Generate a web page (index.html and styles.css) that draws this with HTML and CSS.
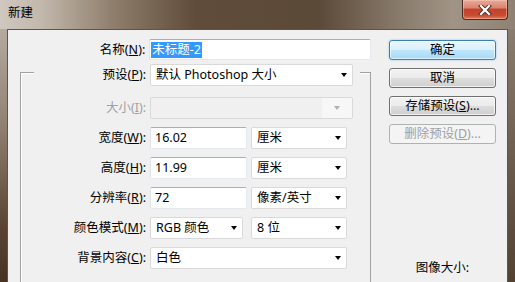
FILE: index.html
```html
<!DOCTYPE html>
<html lang="zh-CN">
<head>
    <meta charset="UTF-8">
    <title>新建</title>
    <link rel="stylesheet" href="styles.css">
</head>
<body>

    <div class="window">
        <div class="titlebar">
            <span class="title">新建</span>
            <div class="close-btn">
                <svg width="14" height="10" viewBox="0 0 14 10">
                    <path d="M3 1 L11 9 M11 1 L3 9" stroke="#4a2a22" stroke-width="4" stroke-linecap="square"/>
                    <path d="M3 1 L11 9 M11 1 L3 9" stroke="#ffffff" stroke-width="2.2" stroke-linecap="square"/>
                </svg>
            </div>
        </div>

        <div class="client">
            <div class="form">
                <!-- name -->
                <div class="row name-row">
                    <label class="lbl lbl-top">名称(<u>N</u>):</label>
                    <div class="textbox w-name"><span class="selected">未标题-2</span></div>
                </div>

                <!-- preset group -->
                <div class="group">
                    <div class="row group-head">
                        <label class="lbl lbl-head">预设(<u>P</u>):</label>
                        <div class="combo w-wide"><span class="val">默认 Photoshop 大小</span><span class="arrow"></span></div>
                    </div>

                    <div class="row">
                        <label class="lbl lbl-in disabled">大小(<u>I</u>):</label>
                        <div class="combo w-wide is-disabled"><span class="val"></span><span class="arrow-box"><span class="arrow"></span></span></div>
                    </div>

                    <div class="row">
                        <label class="lbl lbl-in">宽度(<u>W</u>):</label>
                        <div class="textbox w-num">16.02</div>
                        <div class="combo w-unit"><span class="val">厘米</span><span class="arrow"></span></div>
                    </div>

                    <div class="row">
                        <label class="lbl lbl-in">高度(<u>H</u>):</label>
                        <div class="textbox w-num">11.99</div>
                        <div class="combo w-unit"><span class="val">厘米</span><span class="arrow"></span></div>
                    </div>

                    <div class="row">
                        <label class="lbl lbl-in">分辨率(<u>R</u>):</label>
                        <div class="textbox w-num">72</div>
                        <div class="combo w-unit"><span class="val">像素/英寸</span><span class="arrow"></span></div>
                    </div>

                    <div class="row">
                        <label class="lbl lbl-in">颜色模式(<u>M</u>):</label>
                        <div class="combo w-mode"><span class="val">RGB 颜色</span><span class="arrow"></span></div>
                        <div class="combo w-unit"><span class="val">8 位</span><span class="arrow"></span></div>
                    </div>

                    <div class="row">
                        <label class="lbl lbl-in">背景内容(<u>C</u>):</label>
                        <div class="combo w-bg"><span class="val">白色</span><span class="arrow"></span></div>
                    </div>
                </div>
            </div>

            <div class="side">
                <button class="btn btn-default">确定</button>
                <button class="btn">取消</button>
                <button class="btn">存储预设(<u>S</u>)...</button>
                <button class="btn" disabled>删除预设(<u>D</u>)...</button>
                <div class="img-size">图像大小:</div>
            </div>
        </div>
    </div>

</body>
</html>
```

FILE: styles.css
```css
body {
    margin: 0;
    font-family: "Noto Sans", "Noto Sans CJK SC", sans-serif;
    font-size: 12.5px;
    color: #000;
}

.window {
    width: 515px;
    height: 282px;
    overflow: hidden;
    display: flex;
    flex-direction: column;
    background:
        linear-gradient(180deg, #b4aba0 0, #8f7f70 35%, #5a4332 70%, #3e2a1c 100%) no-repeat 0 29px / 7px 100%,
        linear-gradient(180deg, #8a7c6e 0, #6a5a4b 50%, #4d3a2b 100%) no-repeat 508px 29px / 7px 100%,
        linear-gradient(90deg, #cfc8bf 0, #c2b8ac 8%, #8f7e6c 22%, #5f4c3a 38%, #5c4a39 62%, #8a7c6d 78%, #a09486 88%, #8f8274 100%);
}

/* title bar */
.titlebar {
    flex-shrink: 0;
    height: 29px;
    display: flex;
    justify-content: space-between;
    align-items: flex-start;
}
.title {
    padding: 5px 0 0 8px;
    line-height: 16px;
}
.close-btn {
    box-sizing: border-box;
    width: 46px;
    height: 20px;
    margin-right: 7px;
    border: 1px solid #4a2a22;
    border-top: none;
    border-radius: 0 0 4px 4px;
    background: linear-gradient(180deg, #e9a99a 0, #d98670 40%, #c2432b 50%, #c94a31 80%, #e07a5c 100%);
    box-shadow: inset 0 0 0 1px rgba(255, 210, 190, 0.45);
    display: flex;
    align-items: center;
    justify-content: center;
}

/* client area */
.client {
    flex: 1;
    min-height: 0;
    margin: 0 7px;
    border: 1px solid #5e544b;
    border-bottom: none;
    background: #f0f0f0;
    padding-top: 9px;
    display: flex;
}

.form {
    width: 363px;
}

.row {
    display: flex;
    align-items: center;
    gap: 4px;
    height: 22px;
    margin-top: 8px;
}

.lbl {
    text-align: right;
    white-space: nowrap;
    line-height: 16px;
}
.lbl-top { width: 138px; }
.lbl-head { width: 112px; }
.lbl-in { width: 125px; }
.disabled { color: #a0a0a0; }

.name-row {
    margin-top: 0;
    height: 21px;
}

/* group box */
.group {
    margin: 12px 0 0 12px;
    width: 349px;
    height: 260px;
    border: 1px solid #a0a0a0;
    border-bottom: none;
    box-shadow: inset 1px 1px 0 #fff;
}
.group-head {
    margin: -9px 0 0 13px;
    width: 319px;
    padding-right: 7px;
    background: #f0f0f0;
}
.group-head + .row {
    margin-top: 11px;
}

/* fields */
.textbox,
.combo {
    box-sizing: border-box;
    height: 22px;
    background: #fff;
    border: 1px solid #d9d9d9;
    border-radius: 2px;
    display: flex;
    align-items: center;
    line-height: 16px;
    white-space: nowrap;
}
.textbox {
    padding-left: 4px;
    border-color: #abadb3 #e3e9ef #e3e9ef #e2e3ea;
}
.name-row .textbox {
    height: 21px;
    padding-left: 1px;
}
.selected {
    background: #3399ff;
    color: #fff;
    padding: 0 1px;
}
.combo {
    padding: 0 5px 0 5px;
}
.combo .val {
    flex: 1;
}
.arrow {
    width: 0;
    height: 0;
    border-left: 3.5px solid transparent;
    border-right: 3.5px solid transparent;
    border-top: 4px solid #000;
}
.is-disabled {
    background: #f0f0f0;
    border-color: #d9d9d9;
    padding-right: 0;
}
.arrow-box {
    width: 30px;
    height: 20px;
    background: #f7f7f7;
    display: flex;
    align-items: center;
    justify-content: center;
}
.is-disabled .arrow {
    border-top-color: #b0b0b0;
}

.w-name { width: 223px; }
.w-wide { width: 203px; }
.w-num { width: 97px; }
.w-unit { width: 96px; }
.w-mode { width: 93px; margin-right: 4px; }
.w-bg { width: 197px; }

/* buttons */
.side {
    margin-left: 18px;
    width: 107px;
    display: flex;
    flex-direction: column;
    gap: 8px;
    padding-top: 1px;
}
.btn {
    flex-shrink: 0;
    height: 20px;
    padding: 0;
    font: inherit;
    color: #000;
    border: 1px solid #707070;
    border-radius: 3px;
    background: linear-gradient(180deg, #f2f2f2 0, #ebebeb 50%, #dddddd 50%, #cfcfcf 100%);
    box-shadow: inset 0 0 0 1px rgba(255, 255, 255, 0.7);
    line-height: 16px;
}
.btn-default {
    border-color: #3c7fb1;
    background: linear-gradient(180deg, #eaf6fd 0, #d9f0fc 50%, #bee6fd 50%, #a7d9f5 100%);
    box-shadow: inset 0 0 0 1px rgba(255, 255, 255, 0.6), 0 0 2px #7ec3ec;
}
.btn:disabled {
    color: #a0a0a0;
    border-color: #adb2b5;
    background: #f4f4f4;
    box-shadow: none;
}

.img-size {
    margin-top: 108px;
    text-align: center;
    line-height: 16px;
}
```
